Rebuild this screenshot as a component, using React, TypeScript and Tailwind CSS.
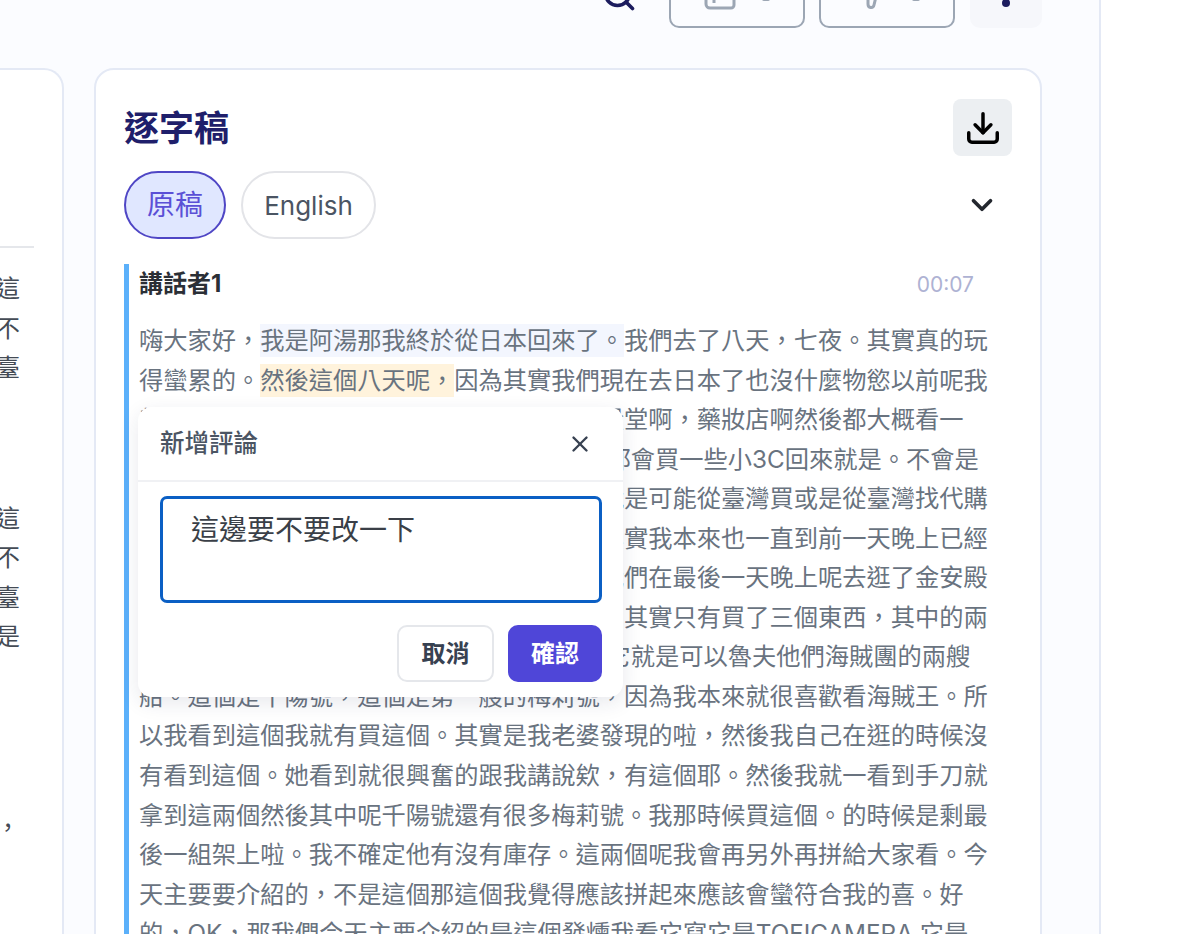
import React from 'react'
import { ChevronDown, Download, Search, X } from 'lucide-react'

type Part = { text: string; mark?: 'blue' | 'amber' }

const transcript: Part[][] = [
  [
    { text: '嗨大家好，' },
    { text: '我是阿湯那我終於從日本回來了。', mark: 'blue' },
    { text: '我們去了八天，七夜。其實真的玩' }
  ],
  [
    { text: '得蠻累的。' },
    { text: '然後這個八天呢，', mark: 'amber' },
    { text: '因為其實我們現在去日本了也沒什麼物慾以前呢我' }
  ],
  [{ text: '都會想要去逛那些什麼電器店還有像是金安殿堂啊，藥妝店啊然後都大概看一' }],
  [{ text: '每次去的時候大家也都是這樣然後我們也是 都會買一些小3C回來就是。不會是' }],
  [{ text: '說一定要去買什麼東西，因為現在其實也都就是可能從臺灣買或是從臺灣找代購' }],
  [{ text: '所以這一次去日本也沒有想要買什麼，真的其實我本來也一直到前一天晚上已經' }],
  [{ text: '覺得這次應該就不會再買東西了，結果後來我們在最後一天晚上呢去逛了金安殿' }],
  [{ text: '堂然後就看到了一些很有趣的小東西，那我們其實只有買了三個東西，其中的兩' }],
  [{ text: '個就是這兩個海賊王的模型啊然後呢就是這 它就是可以魯夫他們海賊團的兩艘' }],
  [{ text: '船。這個是千陽號，這個是第一艘的梅莉號，因為我本來就很喜歡看海賊王。所' }],
  [{ text: '以我看到這個我就有買這個。其實是我老婆發現的啦，然後我自己在逛的時候沒' }],
  [{ text: '有看到這個。她看到就很興奮的跟我講說欸，有這個耶。然後我就一看到手刀就' }],
  [{ text: '拿到這兩個然後其中呢千陽號還有很多梅莉號。我那時候買這個。的時候是剩最' }],
  [{ text: '後一組架上啦。我不確定他有沒有庫存。這兩個呢我會再另外再拼給大家看。今' }],
  [{ text: '天主要要介紹的，不是這個那這個我覺得應該拼起來應該會蠻符合我的喜。好' }],
  [{ text: '的，OK，那我們今天主要介紹的是這個發燻我看它寫它是TOFICAMERA 它是' }]
]

const font = { fontFamily: '"Inter", "Noto Sans CJK TC", sans-serif' }

function TranscriptLine({ parts }: { parts: Part[] }) {
  return (
    <div className="h-[39.55px] whitespace-pre leading-[39.55px]">
      {parts.map((part, i) => (
        <span
          key={i}
          className={
            part.mark === 'blue'
              ? 'bg-[#f3f6fe] py-[2px]'
              : part.mark === 'amber'
                ? 'bg-[#fff3dc] py-[2px]'
                : ''
          }
        >
          {part.text}
        </span>
      ))}
    </div>
  )
}

function CommentDialog() {
  return (
    <div className="absolute left-[9px] top-[143px] z-10 h-[290px] w-[485px] rounded-[14px] bg-white shadow-[0_6px_20px_rgba(30,41,80,0.1)]">
      <div className="flex h-[75px] items-center justify-between border-b-2 border-[#f0f1f4] pl-[22px] pr-[30px]">
        <span className="text-[24.5px] font-medium text-[#4b5563]">新增評論</span>
        <X className="h-[26px] w-[26px] text-[#374151]" strokeWidth={2.2} />
      </div>
      <div className="pl-[22px] pr-[21px] pt-[14px]">
        <div className="h-[107px] rounded-[7px] border-[3px] border-[#0b5fc4] pl-[28px] pt-[13px] text-[28px] leading-[36px] text-[#3a3f47]">
          這邊要不要改一下
        </div>
        <div className="mt-[22px] flex justify-end gap-[14px]">
          <button className="h-[57px] w-[97px] rounded-[10px] border-2 border-[#e5e7eb] bg-white text-[24px] font-bold text-[#374151]">
            取消
          </button>
          <button className="h-[57px] w-[94px] rounded-[10px] bg-[#4f46d8] text-[24px] font-bold text-white">
            確認
          </button>
        </div>
      </div>
    </div>
  )
}

function SideCard() {
  const groups = [
    { mt: 'mt-[21px]', chars: ['這', '不', '臺'] },
    { mt: 'mt-[111px]', chars: ['這', '不', '臺', '是'] },
    { mt: 'mt-[151px]', chars: ['，'] }
  ]
  return (
    <div className="h-[1000px] w-[64px] shrink-0 overflow-hidden rounded-tr-[20px] border-r-2 border-t-2 border-[#e4e9f5] bg-white pr-[28px] pt-[176px]">
      <div className="h-[2px] bg-[#e5e7eb]" />
      {groups.map((group, i) => (
        <div key={i} className={`${group.mt} flex flex-col items-end pr-[14px] text-[24.25px] text-[#444b55]`}>
          {group.chars.map((c, j) => (
            <div key={j} className="h-[39.5px] whitespace-nowrap leading-[39.5px]">
              {c}
            </div>
          ))}
        </div>
      ))}
    </div>
  )
}

export default function App() {
  return (
    <div className="h-[934px] w-[1200px] overflow-hidden bg-white" style={font}>
      <div className="h-[934px] w-[1101px] overflow-hidden border-r-2 border-[#e4e9f5] bg-[#fbfcff]">
        {/* Toolbar, cut by the top of the page */}
        <div className="flex h-[28px] items-end justify-end overflow-hidden pr-[57px]">
          <Search className="mb-[15px] mr-[32px] h-[36px] w-[36px] text-[#1c1c5e]" strokeWidth={2.4} />
          <button className="mr-[14px] flex h-[60px] w-[136px] shrink-0 items-end rounded-[10px] border-2 border-[#9ca6b4] pb-[16px] pl-[33px] text-[#9ca6b4]">
            <svg width="32" height="30" viewBox="0 0 32 30" fill="none" stroke="currentColor" strokeWidth="3">
              <path d="M2 0v24a4 4 0 0 0 4 4h21a3 3 0 0 0 3-3V0M10 0v23" />
            </svg>
            <span className="mb-[9px] ml-[26px] h-[4px] w-[8px] rounded-full bg-[#9ca6b4]" />
          </button>
          <button className="mr-[15px] flex h-[60px] w-[136px] shrink-0 items-end rounded-[10px] border-2 border-[#9ca6b4] pb-[16px] pl-[45px] text-[#9ca6b4]">
            <svg width="16" height="30" viewBox="0 0 16 30" fill="none" stroke="currentColor" strokeWidth="3">
              <path d="M14 0 8 25c-1 4-6 3-6-1V10" />
            </svg>
            <span className="mb-[9px] ml-[30px] h-[4px] w-[8px] rounded-full bg-[#9ca6b4]" />
          </button>
          <button className="flex h-[60px] w-[72px] shrink-0 items-end justify-center rounded-[10px] bg-[#f6f7fb] pb-[21px]">
            <span className="h-[8px] w-[8px] rounded-full bg-[#1c1c5e]" />
          </button>
        </div>

        <div className="mt-[40px] flex gap-[30px]">
          <SideCard />

          <div className="relative h-[1000px] w-[948px] shrink-0 rounded-t-[20px] border-2 border-[#e4e9f5] bg-white px-[28px] pt-[29px]">
            <div className="flex items-center justify-between">
              <h1 className="mt-[2px] text-[35px] font-bold text-[#1f1f6b]">逐字稿</h1>
              <button className="flex h-[57px] w-[59px] items-center justify-center rounded-[8px] bg-[#eceff2]">
                <Download className="h-[38px] w-[38px] text-black" strokeWidth={2.2} />
              </button>
            </div>

            <div className="mt-[15px] flex items-center">
              <span className="flex h-[68px] w-[102px] items-center justify-center rounded-full border-2 border-[#4f46c5] bg-[#e0e7ff] text-[28px] text-[#5b50d6]">
                原稿
              </span>
              <span className="ml-[15px] flex h-[68px] w-[135px] items-center justify-center rounded-full border-2 border-[#e3e4e8] text-[26px] text-[#4b5563]">
                English
              </span>
              <ChevronDown className="ml-auto mr-[13px] h-[34px] w-[34px] text-[#23272e]" strokeWidth={2.6} />
            </div>

            {/* Speaker block */}
            <div className="relative mt-[25px] border-l-[5px] border-[#5bb0fa] pl-[10px] pr-[38px]">
              <div className="flex h-[40px] items-center justify-between">
                <span className="text-[24px] font-bold text-[#2b2f36]">講話者1</span>
                <span className="mt-[1px] text-[21px] text-[#aeb2d3]">00:07</span>
              </div>
              <div className="mt-[17px] w-[880px] text-[24.25px] text-[#69737f]">
                {transcript.map((parts, i) => (
                  <TranscriptLine key={i} parts={parts} />
                ))}
              </div>
              <CommentDialog />
            </div>
          </div>
        </div>
      </div>
    </div>
  )
}
